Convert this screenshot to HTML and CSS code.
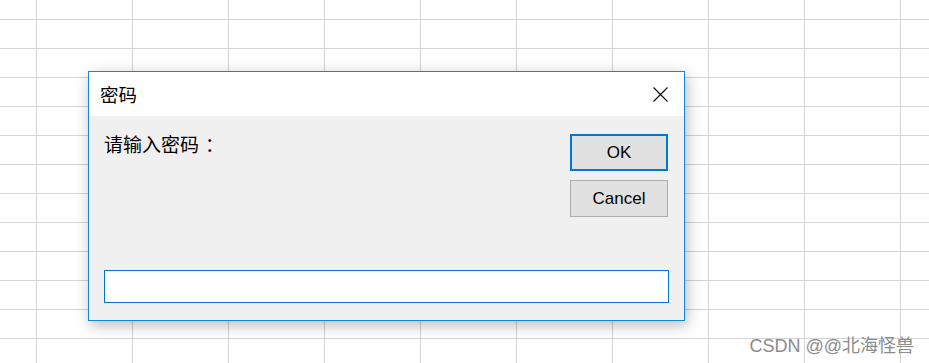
FILE: index.html
```html
<!DOCTYPE html>
<html lang="zh-CN">
<head>
    <meta charset="UTF-8">
    <meta name="viewport" content="width=device-width, initial-scale=1.0">
    <link rel="stylesheet" href="styles.css">
</head>
<body>
    <div class="sheet">
        <div class="dialog">
            <div class="title-bar">
                <span class="title">密码</span>
                <svg class="close" width="15" height="15" viewBox="0 0 15 15">
                    <path d="M0.5 0.5 L14.5 14.5 M14.5 0.5 L0.5 14.5" stroke="#000" stroke-width="1.1" fill="none" />
                </svg>
            </div>
            <div class="dialog-body">
                <div class="top-row">
                    <p class="prompt">请输入密码<span class="colon">：</span></p>
                    <div class="buttons">
                        <button class="btn btn-default" type="button">OK</button>
                        <button class="btn" type="button">Cancel</button>
                    </div>
                </div>
                <input class="password" type="text" />
            </div>
        </div>
        <div class="watermark">CSDN @@北海怪兽</div>
    </div>
</body>
</html>
```

FILE: styles.css
```css
body {
    margin: 0;
    background-color: #fff;
}

.sheet {
    position: relative;
    width: 929px;
    height: 363px;
    overflow: hidden;
    padding: 71px 0 0 88px;
    box-sizing: border-box;
    background-image:
        linear-gradient(to right, #d4d4d4 1px, transparent 1px),
        linear-gradient(to bottom, #d4d4d4 1px, transparent 1px);
    background-size: 96px 29px;
    background-position: 36px 19px;
}

.dialog {
    width: 597px;
    height: 250px;
    box-sizing: border-box;
    border: 1px solid #1883d7;
    background-color: #f0f0f0;
    box-shadow: 2px 4px 14px rgba(0, 0, 0, 0.28);
    display: flex;
    flex-direction: column;
    font-family: "Noto Sans CJK SC", "Liberation Sans", sans-serif;
}

.title-bar {
    height: 44px;
    background-color: #fff;
    display: flex;
    align-items: center;
    justify-content: space-between;
    padding: 0 16px 0 11px;
}

.title {
    font-size: 18.5px;
    line-height: 44px;
    color: #000;
}

.close {
    display: block;
}

.dialog-body {
    flex: 1;
    display: flex;
    flex-direction: column;
    padding: 18px 15px 17px 15px;
}

.top-row {
    flex: 1;
    display: flex;
    justify-content: space-between;
    align-items: flex-start;
}

.prompt {
    margin: 0;
    font-size: 19px;
    line-height: 24px;
    margin-top: -2px;
    color: #000;
}

/* the UI font centres the full-width colon */
.colon {
    padding-left: 6px;
}

.buttons {
    display: flex;
    flex-direction: column;
    gap: 9px;
    margin-right: 1px;
}

.btn {
    width: 98px;
    height: 37px;
    box-sizing: border-box;
    background-color: #e1e1e1;
    border: 1px solid #adadad;
    border-radius: 0;
    padding: 0;
    font-family: "Liberation Sans", Arial, sans-serif;
    font-size: 17px;
    color: #000;
}

.btn-default {
    border: 2px solid #0078d7;
}

.password {
    display: block;
    width: 100%;
    height: 33px;
    box-sizing: border-box;
    margin: 0;
    border: 1px solid #0078d7;
    background-color: #fff;
    outline: none;
}

.watermark {
    position: absolute;
    right: 15px;
    bottom: 6px;
    font-family: "Liberation Sans", "Noto Sans CJK SC", sans-serif;
    font-size: 18px;
    color: #8c8c8c;
}
```
